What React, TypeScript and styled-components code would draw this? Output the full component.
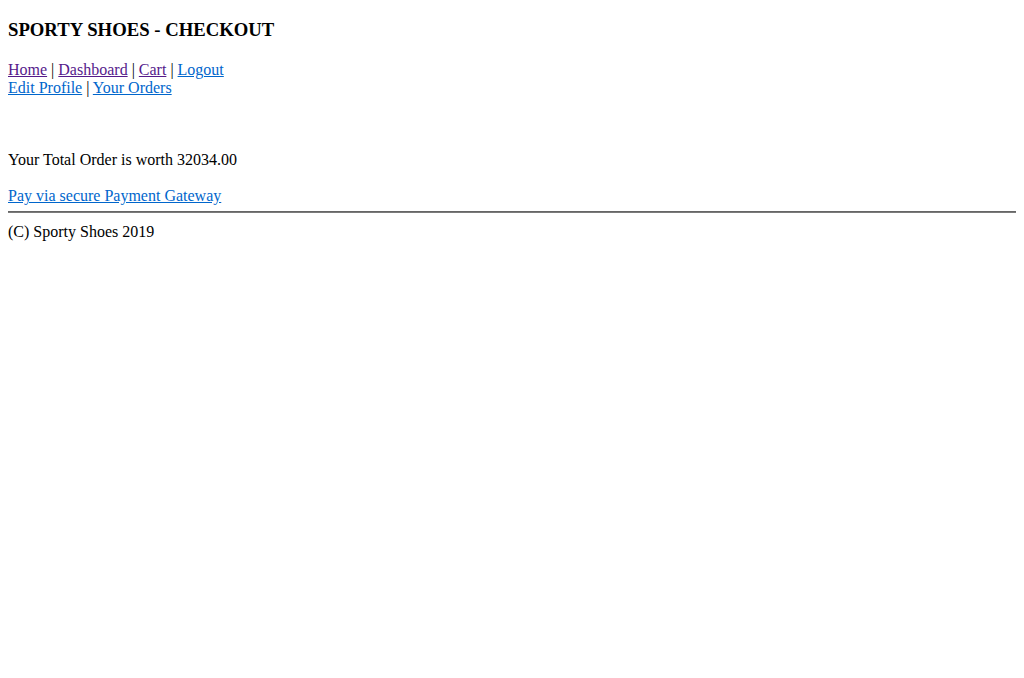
import React from "react";
import styled, { createGlobalStyle } from "styled-components";

const Global = createGlobalStyle`
  body {
    margin: 8px;
    font-family: "Liberation Serif", "Times New Roman", serif;
    font-size: 16px;
    color: #000;
    background: #fff;
  }
`;

const Page = styled.div`
  display: block;
`;

const Title = styled.h3`
  font-size: 18.72px;
  font-weight: bold;
  margin: 10.72px 0 20.72px;
`;

const NavLine = styled.div`
  line-height: normal;
`;

const Sep = styled.span`
  color: #000;
`;

const NavLink = styled.a<{ $visited?: boolean }>`
  color: ${(p) => (p.$visited ? "#551a8b" : "#0066cc")};
  text-decoration: underline;
  cursor: pointer;
`;

const Summary = styled.div`
  margin-top: 54px;
`;

const PayLine = styled.div`
  margin-top: 18px;
`;

const Rule = styled.hr`
  margin: 6px 0 10px;
  border: none;
  border-top: 1px solid #666;
  border-bottom: 1px solid #7a7a7a;
  height: 0;
`;

const Footer = styled.div``;

export default function App() {
  return (
    <>
      <Global />
      <Page>
        <Title>SPORTY SHOES - CHECKOUT</Title>
        <NavLine>
          <NavLink $visited href="#">Home</NavLink> <Sep>|</Sep>{" "}
          <NavLink $visited href="#">Dashboard</NavLink> <Sep>|</Sep>{" "}
          <NavLink $visited href="#">Cart</NavLink> <Sep>|</Sep>{" "}
          <NavLink href="#">Logout</NavLink>
        </NavLine>
        <NavLine>
          <NavLink href="#">Edit Profile</NavLink> <Sep>|</Sep>{" "}
          <NavLink href="#">Your Orders</NavLink>
        </NavLine>
        <Summary>Your Total Order is worth 32034.00</Summary>
        <PayLine>
          <NavLink href="#">Pay via secure Payment Gateway</NavLink>
        </PayLine>
        <Rule />
        <Footer>(C) Sporty Shoes 2019</Footer>
      </Page>
    </>
  );
}
